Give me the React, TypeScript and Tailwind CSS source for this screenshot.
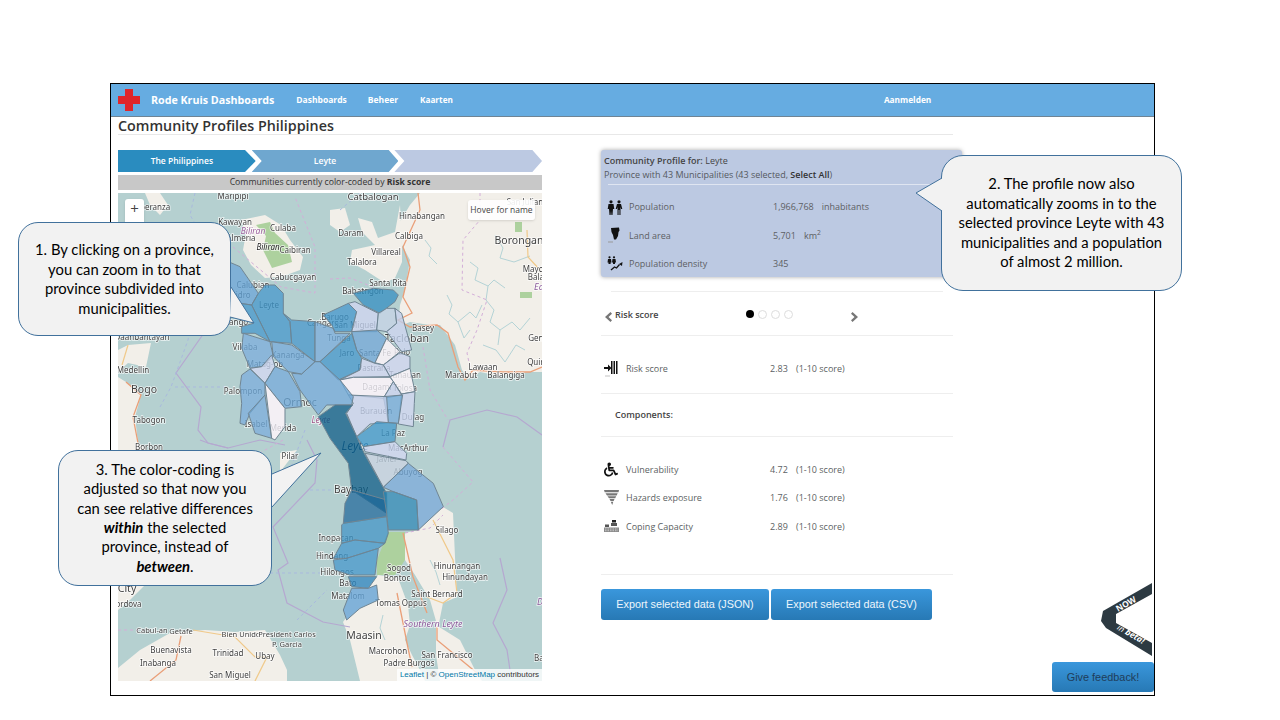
import type { ReactNode } from 'react';
import { FaWheelchair } from 'react-icons/fa';

// municipality shapes, traced on two crops: north part has origin 220,270, south part 280,400, both 3x
const northShapes: [string, string][] = [
  ['-10,-40 60,-10 115,70 95,105 60,100 30,60', '#7fb0d6'],
  ['30,60 60,100 95,105 150,215 105,190 65,190 65,170 100,160', '#62a5cd'],
  ['135,45 165,45 190,70 190,130 210,155 215,220 150,215 95,105 115,70', '#62a5cd'],
  ['190,130 215,150 285,155 285,275 215,220 210,155', '#64a6cd'],
  ['285,155 340,175 345,190 390,190 300,275 285,275', '#8ab6d8'],
  ['310,135 385,100 410,125 395,185 345,185 335,165', '#62a6ce'],
  ['385,100 405,95 475,130 470,185 395,185 410,125', '#c9d4e8'],
  ['400,70 460,55 520,60 535,75 525,95 480,130 430,105', '#549fc5'],
  ['475,130 500,115 525,115 530,160 500,185 470,180', '#c3d3e0'],
  ['525,115 545,130 575,240 545,245 500,185 530,160', '#c8d4e8'],
  ['395,185 470,180 500,205 465,280 425,260 410,240', '#84b2d6'],
  ['395,190 410,240 425,265 420,300 355,330 300,275', '#62a6cd'],
  ['500,205 540,245 490,285 465,278', '#f0edf2'],
  ['540,248 570,260 570,295 510,320 490,285', '#cdd6ea'],
  ['425,265 465,280 490,285 510,320 400,322 360,330 420,300', '#cdd6ea'],
  ['510,320 570,295 585,365 545,372 520,335', '#f3f0f3'],
  ['360,330 400,322 510,322 520,335 490,385 385,375', '#f2eff3'],
  ['520,335 490,385 545,375', '#c9d4e8'],
  ['545,372 585,365 583,400 580,470 535,462', '#ccd6ea'],
  ['490,380 548,375 535,460 505,458', '#88b5d8'],
  ['385,375 500,380 505,458 450,462 410,500 380,430 400,400', '#ccd6ea'],
  ['285,275 300,275 360,330 400,380 395,405 320,405 295,435 240,360 215,310 245,312', '#87b4d7'],
  ['155,215 215,225 285,275 245,312 205,305 160,260', '#87b4d7'],
  ['70,190 150,215 160,260 125,290 90,295 65,235', '#8ab5d9'],
  ['90,295 125,290 155,255 165,290 135,340', '#ccd6ea'],
  ['165,290 205,305 240,365 245,410 195,415 135,340', '#87b4d7'],
  ['65,315 90,297 135,340 135,375 90,430 75,465 60,460 65,400 60,350', '#8ab5d9'],
  ['135,375 155,505 105,490 85,430', '#8ab5d9'],
  ['135,340 195,415 195,470 165,510 155,505', '#f2eff3'],
];

const southShapes: [string, string][] = [
  ['115,50 165,15 218,15 197,40 230,110 255,165 320,280 320,340 245,290 215,270 205,190 150,115', '#39799a'],
  ['215,270 320,300 320,350 190,370 195,310', '#4884a8'],
  ['230,110 290,65 350,70 345,125 250,140', '#60a7cd'],
  ['250,140 345,125 380,160 378,180 255,155', '#ccd6ea'],
  ['255,160 378,182 385,190 310,262', '#c6d3de'],
  ['385,190 460,250 490,320 415,390 410,300 340,275 310,262', '#8ab4d7'],
  ['310,275 340,275 410,300 415,390 325,390 320,340', '#539bbd'],
  ['190,370 320,350 325,400 315,430 225,420 185,430 185,375', '#60a4c9'],
  ['185,430 225,420 315,430 295,445 200,475 160,475', '#63a5cd'],
  ['160,480 200,475 295,445 285,525 210,525 165,510', '#62a5cd'],
  ['205,530 290,530 265,565 215,560', '#5499c5'],
  ['215,565 265,565 290,555 295,600 240,625 200,660 190,630', '#80b1d9'],
];

const landShapes = [
  '395,193 542,193 542,372 530,372 520,373 500,376 480,372 468,379 462,370 455,345 440,325 430,325 410,322 398,327 400,305 405,290 410,260 402,245 398,225 410,205 420,193',
  '330,210 345,208 350,225 340,232 330,225',
  '400,205 395,232 378,238 372,222 358,218 362,232 375,245 352,250 350,262 365,270 385,283 395,278 402,262 402,245',
  '241,220 265,215 281,225 290,240 303,257 300,270 281,277 265,278 251,265 243,250 246,233',
  '118,377 126,382 141,395 135,417 138,443 150,452 118,452',
  '128,345 151,343 146,367 128,363 118,372 118,350',
  '145,193 160,193 168,205 160,215 150,205',
  '343,622 378,575 398,578 408,605 410,625 405,640 412,655 420,670 425,681 360,681 350,640',
  '405,533 418,530 443,507 453,513 455,557 457,597 443,603 438,628 430,600 415,575 405,560',
  '436,625 460,640 475,670 482,681 440,681 436,655',
  '170,633 205,630 235,632 265,630 280,655 287,670 287,681 118,681 118,668 140,650',
  '118,583 145,585 130,600 118,610',
  '280,453 297,450 280,472',
];

const greenShapes = [
  '256,225 270,222 275,233 288,245 292,262 272,268 263,250 266,236',
  '388,532 405,532 405,560 395,575 377,575 377,560',
  '515,222 522,222 522,232 515,232',
  '520,292 532,292 532,298 520,298',
];

const boundaryLines = [
  '211,323 176,373 201,407 198,430 208,443 228,448',
  '307,440 317,460 315,483 273,527 288,563 278,570 287,603 323,622 350,627',
  '443,447 450,420 487,410 517,417 542,435',
  '500,558 507,590 493,623 507,650 510,670',
  '200,440 208,443 228,448 260,440 285,445',
];

const dashedLines = [
  '480,193 480,220 463,240 462,290 487,300 477,330 467,353 470,367',
  '423,347 430,390 448,420',
  '330,279 350,278 373,287',
  '233,247 281,287 315,293 315,247 295,197',
  '443,447 473,482 453,500 440,510',
  '118,630 150,630',
  '405,533 430,528 443,515',
  '283,440 235,467 200,490',
];

const seaLines = [
  '160,407 171,387 188,340 195,300',
  '175,387 228,387',
  '270,573 323,573',
  '310,490 333,490',
  '297,620 327,590',
  '195,193 190,215 205,240',
  '340,210 360,193',
  '305,430 290,470 270,500',
];

const roadLines = [
  '418,193 420,210 403,247 410,267 403,297 412,313 398,320 410,327 437,325 448,333 458,367 465,380 473,370 503,372 530,372 542,367',
  '126,382 141,395 133,417 138,443',
  '403,533 413,577 427,613',
  '397,593 407,643 412,667',
  '437,627 437,640 477,673',
  '181,636 176,660 150,681',
];

const minorRoads = [
  '527,230 528,257 540,270',
  '433,520 453,560 457,593 443,603 427,597',
  '193,630 235,637 255,657 270,657',
  '267,657 255,681',
  '128,345 122,365',
];

const rivers = [
  '425,240 431,248 429,256 437,264',
  '447,295 452,305 449,314 458,322 464,338 470,330',
  '458,322 470,312 476,318 482,305',
  '470,262 478,268 475,280 488,286 494,280 505,288',
  '488,286 486,300 494,310 490,322 500,330 498,345',
  '500,330 512,322 520,330 530,318',
  '495,235 503,248 500,258 514,262 530,256',
  '483,345 496,350 505,362 516,345 525,350',
  '383,615 380,628 385,640',
  '430,560 436,572 440,585',
];

type Label = [string, number, number, number?, string?];

const labels: Label[] = [
  ['Maripipi', 233, 196], ['Esperanza', 151, 207], ['Kawayan', 235, 222], ['Culaba', 283, 228], ['Almeria', 241, 238],
  ['Caibiran', 295, 250], ['Cabucgayan', 293, 277], ['Calubian', 253, 285], ['San Isidro', 232, 295], ['Leyte', 269, 305],
  ['Tabango', 232, 322], ['Villaba', 245, 347], ['Matag-ob', 265, 364], ['Kananga', 288, 355], ['Daanbantayan', 142, 337],
  ['Medellin', 133, 370], ['Bogo', 144, 390, 10.5], ['Palompon', 243, 391], ['Ormoc', 300, 403, 10.5], ['Isabel', 256, 424],
  ['Merida', 283, 428], ['Tabogon', 149, 420], ['Borbon', 149, 447], ['Pilar', 290, 456], ['Carigara', 323, 323],
  ['Barugo', 335, 317], ['San Miguel', 355, 325], ['Tunga', 339, 338], ['Jaro', 347, 353], ['Santa Fe', 375, 353],
  ['Pastrana', 374, 368], ['Palo', 402, 352], ['Tanauan', 405, 375], ['Tolosa', 405, 388], ['Dagami', 377, 387],
  ['Burauen', 376, 411], ['Dulag', 413, 417], ['La Paz', 393, 433], ['MacArthur', 408, 448], ['Javier', 387, 459],
  ['Abuyog', 408, 472], ['Baybay', 351, 490, 10], ['Silago', 447, 530], ['Inopacan', 336, 538], ['Hindang', 332, 556],
  ['Hilongos', 337, 572], ['Bato', 348, 583], ['Matalom', 348, 596], ['Sogod', 399, 568], ['Bontoc', 397, 578],
  ['Hinunangan', 457, 566], ['Hinundayan', 465, 577], ['Saint Bernard', 437, 594], ['Tomas Oppus', 401, 603],
  ['Maasin', 364, 636, 10.5], ['Macrohon', 388, 651], ['Padre Burgos', 409, 663], ['San Francisco', 447, 655],
  ['Basilisa', 548, 658], ['Catbalogan', 373, 197, 9.5], ['Hinabangan', 422, 216], ['San Julian', 525, 202], ['Daram', 351, 233],
  ['Calbiga', 409, 236], ['Borongan', 519, 241, 10.5], ['Villareal', 386, 252], ['Talalora', 362, 262], ['Maydolong', 544, 269],
  ['Balangkayan', 552, 277], ['Santa Rita', 388, 283], ['Babatngon', 363, 291], ['Basey', 423, 328], ['Tacloban', 407, 339, 10.5],
  ['General', 543, 338], ['Quinapondan', 553, 362], ['Lawaan', 483, 367], ['Marabut', 461, 375], ['Balangiga', 506, 375],
  ['Cabul-an', 152, 630, 7.5], ['Getafe', 181, 631, 7.5], ['Bien Unido', 241, 634, 7.5], ['President Carlos', 287, 634, 7.5], ['P. Garcia', 287, 644, 7.5],
  ['Buenavista', 171, 650], ['Trinidad', 228, 653], ['Ubay', 265, 656], ['Inabanga', 158, 663], ['San Miguel', 230, 675],
  ['City', 127, 589, 10.5], ['Cordova', 126, 604],
];

const italicLabels: Label[] = [
  ['Biliran', 253, 231, 8.5, '#9a5f9c'], ['Biliran', 268, 247, 8, '#222222'], ['Leyte', 321, 420, 8.5, '#a0568a'],
  ['Southern Leyte', 433, 624, 9, '#8a5a9a'], ['Eastern', 549, 287, 9, '#8a5a9a'], ['Dinagat', 553, 602, 9, '#8a5a9a'],
  ['Leyte', 355, 447, 12, '#1f4a78'],
];

// the fills above are the colours seen in the picture; undo the overlay's opacity over land
const overlayAlpha = 0.8;
const land = [242, 239, 233];
function overlayFill(hex: string) {
  const parts = [1, 3, 5].map((i, n) => {
    const seen = parseInt(hex.slice(i, i + 2), 16);
    return Math.max(0, Math.min(255, Math.round((seen - (1 - overlayAlpha) * land[n]) / overlayAlpha)));
  });
  return `rgb(${parts.join(',')})`;
}

function MapDrawing() {
  return (
    <svg viewBox="118 193 424 488" className="block h-[488px] w-[424px] blur-[0.35px]">
      <rect x="118" y="193" width="424" height="488" fill="#b5d0d0" />
      {landShapes.map((p) => <polygon key={p} points={p} fill="#f2efe9" />)}
      <g transform="translate(220 270) scale(0.3333)">
        {northShapes.map(([p]) => <polygon key={p} points={p} fill="#f2efe9" />)}
      </g>
      <g transform="translate(280 400) scale(0.3333)">
        {southShapes.map(([p]) => <polygon key={p} points={p} fill="#f2efe9" />)}
      </g>
      {greenShapes.map((p) => <polygon key={p} points={p} fill="#add19e" />)}
      <g fill="none">
        {rivers.map((p) => <polyline key={p} points={p} stroke="#b4d3d6" strokeWidth="1" />)}
        {boundaryLines.map((p) => <polyline key={p} points={p} stroke="#b5a8d0" strokeWidth="1.2" />)}
        {dashedLines.map((p) => <polyline key={p} points={p} stroke="#d3aed8" strokeWidth="1" strokeDasharray="3 3" />)}
        {seaLines.map((p) => <polyline key={p} points={p} stroke="#a9b9de" strokeWidth="1" strokeDasharray="3 3" />)}
        {minorRoads.map((p) => <polyline key={p} points={p} stroke="#f0c98a" strokeWidth="1.2" />)}
        {roadLines.map((p) => <polyline key={p} points={p} stroke="#ea9f78" strokeWidth="1.3" />)}
      </g>
      <g fontFamily="'Noto Sans', sans-serif" textAnchor="middle" paintOrder="stroke" stroke="#ffffff" strokeWidth="1.6" strokeOpacity="0.75">
        {labels.map(([t, x, y, size]) => (
          <text key={t + x} x={x} y={y + 3} fontSize={size ?? 8} fill="#3f3f3f">{t}</text>
        ))}
        {italicLabels.map(([t, x, y, size, color]) => (
          <text key={t + x} x={x} y={y + 3} fontSize={size} fontStyle="italic" fill={color}>{t}</text>
        ))}
      </g>
      <g transform="translate(220 270) scale(0.3333)" stroke="#6f8593" strokeWidth="1" fillOpacity={overlayAlpha}>
        {northShapes.map(([p, c]) => <polygon key={p} points={p} fill={overlayFill(c)} vectorEffect="non-scaling-stroke" />)}
      </g>
      <g transform="translate(280 400) scale(0.3333)" stroke="#6f8593" strokeWidth="1" fillOpacity={overlayAlpha}>
        {southShapes.map(([p, c]) => <polygon key={p} points={p} fill={overlayFill(c)} vectorEffect="non-scaling-stroke" />)}
      </g>
    </svg>
  );
}

function PeopleIcon() {
  return (
    <svg viewBox="0 0 16 15" className="h-[15px] w-[16px]" fill="#111111">
      <circle cx="4" cy="1.8" r="1.6" /><path d="M1.5 4h5l.8 5H6l-.5 6H4.4L4 11l-.4 4H2.500L2 9H.7z" />
      <circle cx="12" cy="1.8" r="1.6" /><path d="M10 4h4l1.300 5h-1.200l-.6-2v8h-1.100v-5h-.8v5h-1.100V7l-.6 2H8.700z" />
    </svg>
  );
}

function LandIcon() {
  return (
    <svg viewBox="0 0 14 16" className="h-[16px] w-[14px]">
      <path d="M3 1l8-.5.5 3-1 1.500-.5 4-2 3.500H6L5 8 3.500 5z" fill="#111111" />
      <path d="M0 15h5" stroke="#999999" />
    </svg>
  );
}

function DensityIcon() {
  return (
    <svg viewBox="0 0 16 15" className="h-[15px] w-[16px]" fill="#111111">
      <circle cx="2.500" cy="1.300" r="1.100" /><path d="M1 3h3l.5 3.500H3.600V8H1.500V6.500H.5z" />
      <circle cx="7" cy="1.300" r="1.100" /><path d="M5.500 3h3L9 6.500H8V8H6V6.500H5z" />
      <path d="M4 14l3.500-3 2 1 3-3.500" fill="none" stroke="#111111" strokeWidth="1.300" />
      <path d="M15.500 6l-.5 4-3-2z" />
    </svg>
  );
}

function RiskIcon() {
  return (
    <svg viewBox="0 0 15 16" className="h-[16px] w-[15px]" fill="#111111">
      <path d="M0 6h4V3.500L7.500 7 4 10.500V8H0z" />
      <path d="M7 0h1.500v13H7zM9.500 0H11v13H9.500zM12 0h1.500v13H12z" />
      <path d="M1 15h5" stroke="#aaaaaa" strokeWidth="0.7" />
    </svg>
  );
}

function TornadoIcon() {
  return (
    <svg viewBox="0 0 15 15" className="h-[15px] w-[15px]" fill="#777777">
      <path d="M0 0h15l-.5 2.300H.7zM1.500 3.200h12.200l-1 2.200H3zM3.500 6.200h8.700l-1 2H5zM5.500 9h5l-.8 2H6.500zM6.800 11.800h2.500L8.200 15z" />
    </svg>
  );
}

function CopingIcon() {
  return (
    <svg viewBox="0 0 15 12" className="h-[12px] w-[15px]" fill="#555555">
      <rect x="8" y="0" width="4" height="2.500" fill="#222222" />
      <path d="M7 3h6v3H7zM1 4.500h4V7H1z" />
      <path d="M0 7.500h15V12H0z" fill="#8a8a8a" />
      <path d="M1 9h13M1 10.700h13" stroke="#eeeeee" strokeWidth="0.6" strokeDasharray="1.500 1" />
    </svg>
  );
}

function Chevron({ flip }: { flip?: boolean }) {
  return (
    <svg viewBox="0 0 8 10" className={`h-[10px] w-[8px] ${flip ? 'rotate-180' : ''}`}>
      <path d="M6.500 0L1 5l5.500 5L8 8.300 4.500 5 8 1.700z" fill="#777777" />
    </svg>
  );
}

function Divider({ className = '' }: { className?: string }) {
  return <div className={`h-px bg-[#eeeeee] ${className}`} />;
}

function StatRow({ icon, label, value, unit }: { icon: ReactNode; label: string; value: string; unit?: ReactNode }) {
  return (
    <div className="flex h-[28.300px] items-center text-[#5c5f63]">
      <div className="flex w-[22px] shrink-0 justify-center">{icon}</div>
      <div className="ml-[3px] w-[144px] shrink-0">{label}</div>
      <div className="shrink-0">{value}</div>
      <div className="ml-[8px]">{unit}</div>
    </div>
  );
}

export default function App() {
  return (
    <div className="relative h-[720px] w-[1280px] overflow-hidden bg-white font-['Open_Sans',sans-serif]">
      <div className="relative ml-[110px] mt-[83px] h-[613px] w-[1045px] border border-black bg-white">
        <nav className="flex h-[33px] items-center border-b border-[#6f8494] bg-[#66ace1] text-white">
          <div className="relative ml-[7px] h-[22px] w-[22px] shrink-0">
            <div className="absolute left-[7px] top-0 h-[22px] w-[8px] bg-[#e0262a]" />
            <div className="absolute left-0 top-[7px] h-[8px] w-[22px] bg-[#e0262a]" />
          </div>
          <span className="ml-[11px] text-[10.700px] font-bold">Rode Kruis Dashboards</span>
          <span className="ml-[22px] text-[8.500px] font-bold">Dashboards</span>
          <span className="ml-[21px] text-[8.500px] font-bold">Beheer</span>
          <span className="ml-[22px] text-[8.200px] font-bold">Kaarten</span>
          <span className="ml-[431px] text-[8.300px] font-bold">Aanmelden</span>
        </nav>

        <div className="ml-[7px] w-[835px]">
          <h1 className="box-content h-[17px] border-b border-[#e8e8e8] text-[14.300px] font-semibold leading-[17px] text-[#333333]">Community Profiles Philippines</h1>

          <div className="mt-[15px] flex">
            <div className="w-[424px] shrink-0">
              <div className="flex h-[22px] text-[8.500px] font-semibold text-white">
                <div className="flex w-[138px] items-center justify-center bg-[#2a8cbf] pr-[10px] pt-[1px] [clip-path:polygon(0_0,127px_0,100%_50%,127px_100%,0_100%)]">The Philippines</div>
                <div className="-ml-[4px] flex w-[147px] items-center justify-center bg-[#6fa7cf] pt-[1px] [clip-path:polygon(0_0,137px_0,100%_50%,137px_100%,0_100%,10px_50%)]">Leyte</div>
                <div className="-ml-[4px] w-[148px] bg-[#bcc9e2] [clip-path:polygon(0_0,138px_0,100%_50%,138px_100%,0_100%,10px_50%)]" />
              </div>
              <div className="mt-[3px] flex h-[15px] items-center justify-center bg-[#c8c8c8] text-[8.700px] text-[#333333]">
                <span>Communities currently color-coded by <b>Risk score</b></span>
              </div>
              <div className="relative mt-[3px] h-[488px]">
                <MapDrawing />
                <div className="absolute left-[7px] top-[6px] h-[28px] w-[19px] rounded-[3px] bg-white text-center text-[15px] leading-[19px] text-[#444444] shadow">+</div>
                <div className="absolute right-[7px] top-[7px] flex h-[20px] w-[67px] items-center justify-center rounded-[3px] bg-white/90 text-[8.500px] text-[#444444] shadow-sm">Hover for name</div>
                <div className="absolute bottom-0 right-0 flex h-[12px] w-[145px] items-center justify-center whitespace-nowrap bg-white/80 font-['Liberation_Sans',sans-serif] text-[8px] text-[#333333]">
                  <span><span className="text-[#0078a8]">Leaflet</span> | © <span className="text-[#0078a8]">OpenStreetMap</span> contributors</span>
                </div>
              </div>
            </div>

            <div className="ml-[59px] w-[352px] shrink-0 text-[9px]">
              <div className="h-[127px] w-[361px] rounded-[3px] bg-[#bcc9e2] px-[3px] pt-[4px] shadow-[0_0_4px_rgba(0,0,0,0.35)]">
                <div className="h-[14px] leading-[14px] text-[#444444]"><b className="font-semibold">Community Profile for:</b> Leyte</div>
                <div className="h-[14px] leading-[14px] text-[#55595f]">Province with 43 Municipalities (43 selected, <span className="font-semibold text-[#333333]">Select All</span>)</div>
                <div className="ml-[4px] mt-[2px] h-px w-[343px] bg-[#dfe5f1]" />
                <div className="mt-[8px]">
                  <StatRow icon={<PeopleIcon />} label="Population" value="1,966,768" unit="inhabitants" />
                  <StatRow icon={<LandIcon />} label="Land area" value="5,701" unit={<>km<sup>2</sup></>} />
                  <StatRow icon={<DensityIcon />} label="Population density" value="345" />
                </div>
              </div>

              <Divider className="ml-[10px] mt-[14px] w-[332px]" />
              <div className="relative flex h-[43px] items-center pt-[2px]">
                <div className="ml-[3px] mt-[5px]"><Chevron /></div>
                <b className="ml-[3px] font-semibold text-[#444444]">Risk score</b>
                <div className="absolute left-[145px] top-[18px] flex gap-[4px]">
                  <span className="h-[8px] w-[8px] rounded-full bg-black" />
                  <span className="h-[9px] w-[9px] rounded-full border border-[#dddddd]" />
                  <span className="h-[9px] w-[9px] rounded-full border border-[#dddddd]" />
                  <span className="h-[9px] w-[9px] rounded-full border border-[#dddddd]" />
                </div>
                <div className="absolute left-[250px] top-[20px]"><Chevron flip /></div>
              </div>
              <Divider />

              <div className="flex h-[57px] items-center pt-[8px] text-[#5c5f63]">
                <div className="ml-[3px] w-[22px] shrink-0"><RiskIcon /></div>
                <div className="w-[144px] shrink-0">Risk score</div>
                <div className="w-[26px] shrink-0">2.83</div>
                <div>(1-10 score)</div>
              </div>
              <Divider />
              <div className="flex h-[42px] items-center pl-[14px] font-semibold text-[#444444]">Components:</div>
              <Divider />

              <div className="mt-[18px]">
                {[
                  { icon: <FaWheelchair className="h-[15px] w-[14px] text-[#111111]" />, label: 'Vulnerability', value: '4.72' },
                  { icon: <TornadoIcon />, label: 'Hazards exposure', value: '1.76' },
                  { icon: <CopingIcon />, label: 'Coping Capacity', value: '2.89' },
                ].map((row) => (
                  <div key={row.label} className="flex h-[28.500px] items-center text-[#5c5f63]">
                    <div className="ml-[3px] w-[22px] shrink-0">{row.icon}</div>
                    <div className="w-[144px] shrink-0">{row.label}</div>
                    <div className="w-[26px] shrink-0">{row.value}</div>
                    <div>(1-10 score)</div>
                  </div>
                ))}
              </div>
              <Divider className="mt-[33px]" />

              <div className="mt-[14px] flex gap-[2px] font-['Liberation_Sans',sans-serif] text-[10.800px] text-[#eef6fc]">
                <button className="h-[31px] w-[168px] rounded-[3px] bg-gradient-to-b from-[#3a97dc] to-[#2779b5]">Export selected data (JSON)</button>
                <button className="h-[31px] w-[161px] rounded-[3px] bg-gradient-to-b from-[#3a97dc] to-[#2779b5]">Export selected data (CSV)</button>
              </div>
            </div>
          </div>
        </div>

        <svg viewBox="1101 580 55 78" className="absolute right-0 top-[497px] h-[78px] w-[55px]">
          <path d="M1105 610l49-28v11l-36 20v9l36 20v13l-46-28-5-7z" fill="#2d3a42" />
          <text x="1128" y="606" fontSize="8.500" fontWeight="700" fill="#ffffff" textAnchor="middle" fontFamily="'Open Sans', sans-serif" transform="rotate(-30 1128 603)">NOW</text>
          <text x="1133" y="636" fontSize="8.500" fontStyle="italic" fill="#ffffff" textAnchor="middle" fontFamily="'Open Sans', sans-serif" transform="rotate(30 1133 633)">in <tspan fontWeight="700">beta!</tspan></text>
        </svg>
        <button className="absolute right-0 top-[578px] h-[30px] w-[102px] rounded-[3px] bg-gradient-to-b from-[#3a97dc] to-[#2779b5] font-['Liberation_Sans',sans-serif] text-[10.900px] text-[#1f3d5a]">Give feedback!</button>
      </div>

      {/* callouts lie over the dashboard */}
      <div className="absolute left-[18px] top-[222px] flex h-[114px] w-[213px] items-center justify-center rounded-[20px] border border-[#41719c] bg-[#f2f2f2] text-center font-['Lato',sans-serif] text-[14.800px] leading-[19.500px] text-black">
        <span>1. By clicking on a province,<br />you can zoom in to that<br />province subdivided into<br />municipalities.</span>
        <svg viewBox="0 0 26 40" className="absolute left-[211px] top-[62px] h-[40px] w-[26px] overflow-visible">
          <path d="M1 2l23 36L0 32z" fill="#f2f2f2" />
          <path d="M1 2l23 36L0 32" fill="none" stroke="#41719c" />
        </svg>
      </div>

      <div className="absolute left-[941px] top-[155px] flex h-[136px] w-[241px] items-center justify-center rounded-[22px] border border-[#41719c] bg-[#f2f2f2] text-center font-['Lato',sans-serif] text-[14.800px] leading-[19.500px] text-black">
        <span>2. The profile now also<br />automatically zooms in to the<br />selected province Leyte with 43<br />municipalities and a population<br />of almost 2 million.</span>
        <svg viewBox="0 0 28 36" className="absolute -left-[27px] top-[21px] h-[36px] w-[28px] overflow-visible">
          <path d="M27 1L1 16l26 18z" fill="#f2f2f2" />
          <path d="M27 1L1 16l26 18" fill="none" stroke="#41719c" />
        </svg>
      </div>

      <div className="absolute left-[58px] top-[450px] flex h-[136px] w-[214px] items-center justify-center rounded-[20px] border border-[#41719c] bg-[#f2f2f2] text-center font-['Lato',sans-serif] text-[14.800px] leading-[19.300px] text-black">
        <span>3. The color-coding is<br />adjusted so that now you<br />can see relative differences<br /><b><i>within</i></b> the selected<br />province, instead of<br /><b><i>between</i></b>.</span>
        <svg viewBox="0 0 52 56" className="absolute left-[212px] top-[1px] h-[56px] w-[52px] overflow-visible">
          <path d="M1 22L50 1 1 55z" fill="#f2f2f2" />
          <path d="M1 22L50 1 1 55" fill="none" stroke="#41719c" />
        </svg>
      </div>
    </div>
  );
}
